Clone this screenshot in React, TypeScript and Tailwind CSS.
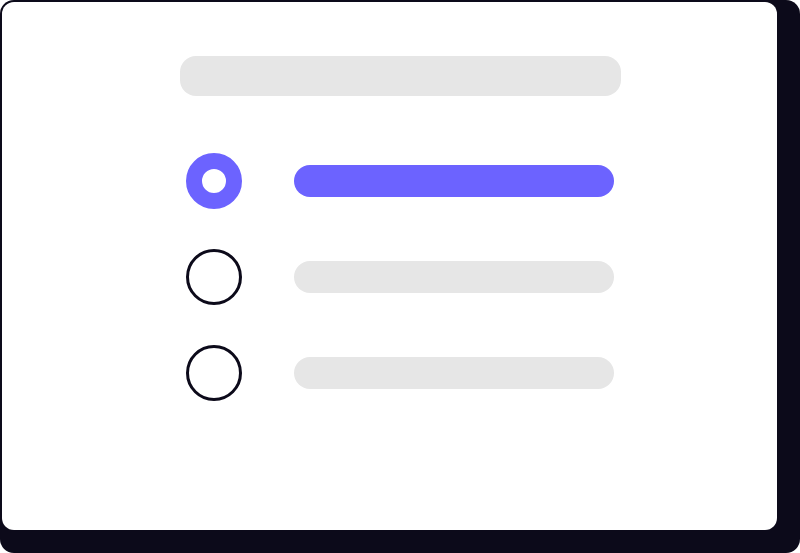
const rows = [
  { id: 1, selected: true },
  { id: 2, selected: false },
  { id: 3, selected: false },
];

export default function App() {
  return (
    <div className="w-[800px] h-[553px] bg-white">
      <div className="w-[800px] h-[553px] rounded-[14px] bg-[#0c0a1a] pl-[2px] pt-[2px]">
        <div className="w-[775px] h-[528px] rounded-[12px] bg-white pt-[54px] pl-[178px]">
          <div className="w-[441px] h-[40px] rounded-[16px] bg-[#e6e6e6]" />

          <div className="mt-[57px] pl-[6px] flex flex-col gap-[40px]">
            {rows.map(row => (
              <div key={row.id} className="flex items-center gap-[52px]">
                {row.selected ? (
                  <div className="w-[56px] h-[56px] rounded-full border-[16px] border-[#6c63ff] bg-white" />
                ) : (
                  <div className="w-[56px] h-[56px] rounded-full border-[3px] border-[#0c0a1a] bg-white" />
                )}
                <div
                  className={
                    row.selected
                      ? 'w-[320px] h-[32px] rounded-full bg-[#6c63ff]'
                      : 'w-[320px] h-[32px] rounded-full bg-[#e6e6e6]'
                  }
                />
              </div>
            ))}
          </div>
        </div>
      </div>
    </div>
  );
}
